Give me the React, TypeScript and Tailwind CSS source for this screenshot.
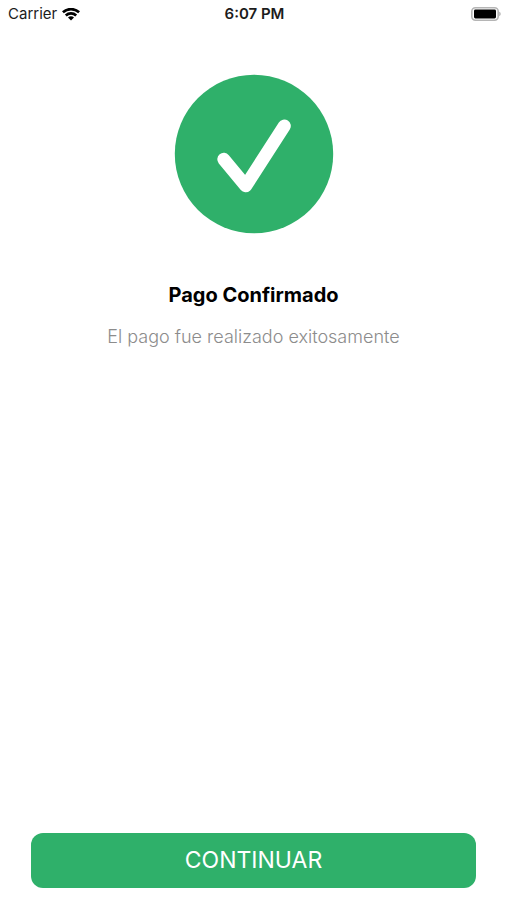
function WifiIcon() {
  return (
    <svg viewBox="0 0 18 13" className="h-[13px] w-[18px]" fill="none" stroke="#000" strokeWidth="2.7" aria-hidden="true">
      <path d="M0.9 4.3C5.5 0.1 12.5 0.1 17.1 4.3" />
      <path d="M3.8 7.5C6.8 4.7 11.2 4.7 14.2 7.5" />
      <path d="M9 12.5L6 9.5C7.7 7.9 10.3 7.9 12 9.5Z" fill="#000" stroke="none" />
    </svg>
  );
}

function BatteryIcon() {
  return (
    <svg viewBox="0 0 30 14" className="h-[14px] w-[30px]" aria-hidden="true">
      <rect x="0.8" y="0.8" width="26.4" height="12.4" rx="3.6" fill="#fff" stroke="#b5b5b5" strokeWidth="1.6" />
      <rect x="3" y="2.6" width="22" height="8.8" rx="1.4" fill="#000" />
      <path d="M28.2 4.8C30.2 5.4 30.2 8.6 28.2 9.2Z" fill="#b5b5b5" />
    </svg>
  );
}

function StatusBar() {
  return (
    <header className="grid h-7 grid-cols-3 items-center pr-1.5 pl-2 text-[15px] text-[#1c1c1c]">
      <div className="flex items-center gap-[5px]">
        <span>Carrier</span>
        <WifiIcon />
      </div>
      <time className="text-center font-semibold">6:07 PM</time>
      <div className="flex justify-end">
        <BatteryIcon />
      </div>
    </header>
  );
}

export default function App() {
  return (
    <div className="flex min-h-screen flex-col bg-white font-['Inter',sans-serif]">
      <StatusBar />

      <main className="flex flex-1 flex-col items-center px-8 pt-[46px] text-center">
        <svg viewBox="0 0 160 160" className="size-40" role="img" aria-label="Confirmado">
          <circle cx="80" cy="80" r="79.2" fill="#2fb06a" />
          <path
            d="M49.8 85.3L71.8 111.8L110.3 52"
            fill="none"
            stroke="#fff"
            strokeWidth="13"
            strokeLinecap="round"
            strokeLinejoin="round"
          />
        </svg>
        <h1 className="mt-[47px] text-xl leading-7 font-bold text-black">Pago Confirmado</h1>
        <p className="mt-3.5 text-lg leading-7 font-light text-[#8c8c8c]">El pago fue realizado exitosamente</p>
      </main>

      <footer className="px-[31px] pb-3">
        <button type="button" className="h-[55px] w-full rounded-xl bg-[#2fb06a] text-[23px] text-white">
          CONTINUAR
        </button>
      </footer>
    </div>
  );
}
